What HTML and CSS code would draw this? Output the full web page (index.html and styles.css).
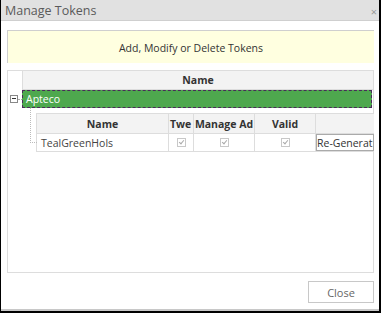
FILE: index.html
```html
<!DOCTYPE html>
<html>
<head>
<meta charset="utf-8">
<link rel="stylesheet" href="styles.css">
</head>
<body>
<div class="dialog">
  <div class="titlebar">
    <span class="title">Manage Tokens</span>
    <span class="x">×</span>
  </div>
  <div class="content">
    <div class="banner">Add, Modify or Delete Tokens</div>
    <div class="grid">
      <div class="row head-row">
        <div class="indent"></div>
        <div class="hcell">Name</div>
      </div>
      <div class="row group-row">
        <div class="indent"><span class="expander"></span><span class="stub"></span></div>
        <div class="gcell">Apteco</div>
      </div>
      <div class="row child-row">
        <div class="tree"></div>
        <div class="child">
          <div class="ctable">
            <div class="cr ch">
              <div class="c c1">Name</div>
              <div class="c c2">Twe</div>
              <div class="c c3">Manage Ad</div>
              <div class="c c4">Valid</div>
              <div class="c c5"></div>
            </div>
            <div class="cr cd">
              <div class="c c1 l">TealGreenHols</div>
              <div class="c c2"><span class="chk"></span></div>
              <div class="c c3"><span class="chk"></span></div>
              <div class="c c4"><span class="chk"></span></div>
              <div class="c c5"><span class="regen">Re-Generat</span></div>
            </div>
          </div>
        </div>
      </div>
    </div>
    <div class="footer">
      <button class="close">Close</button>
    </div>
  </div>
</div>
</body>
</html>
```

FILE: styles.css
```css
html, body { margin: 0; padding: 0; background: #fff; }
body { font-family: "Open Sans", "Noto Sans", sans-serif; font-size: 10.5px; color: #333; }
.dialog {
  width: 381px; height: 313px; box-sizing: border-box;
  border-left: 1px solid #000; border-right: 2px solid #000;
  border-bottom: 2px solid #000;
  display: flex; flex-direction: column; position: relative;
  box-shadow: inset 0 -2px 0 #c8c8c8;
}
.titlebar {
  height: 20px; background: #e1e1e1; border-bottom: 1px solid #cfcfcf;
  display: flex; align-items: center; justify-content: space-between;
  padding: 0 2px 0 4px;
}
.title { font-size: 12.5px; color: #5a5a5a; }
.x { font-size: 11px; color: #999; margin-top: 3px; }
.content { padding: 9px 5px 0 6px; display: flex; flex-direction: column; flex: 1; }
.banner {
  height: 33px; background: #ffffe0; border-top: 1px solid #cfcfcf; border-left: 1px solid #cfcfcf;
  display: flex; align-items: center; justify-content: center; box-sizing: border-box;
  padding-top: 1px; color: #333;
}
.grid {
  margin-top: 7px; height: 203px; box-sizing: border-box;
  border: 1px solid #ddd; display: flex; flex-direction: column;
}
.row { display: flex; }
.indent { width: 14px; border-right: 1px solid #ddd; position: relative; flex: none; }
.head-row { height: 19px; }
.hcell {
  flex: 1; background: #f3f3f3; font-weight: bold; color: #333;
  display: flex; align-items: center; justify-content: center;
  border-bottom: 1px solid #ddd;
}
.group-row { height: 18px; }
.group-row .indent { border-right: none; }
.expander {
  position: absolute; left: 2px; top: 5px; width: 8px; height: 8px;
  border: 1px solid #888; box-sizing: border-box; background: #fff;
}
.expander::after {
  content: ""; position: absolute; left: 1px; top: 2px; width: 4px; height: 1px; background: #333;
}
.stub { position: absolute; left: 10px; top: 9px; width: 4px; border-top: 1px dotted #aaa; }
.gcell {
  flex: 1; background: #4ea84e; color: #fff; border: 1px dashed #4a2a5a;
  display: flex; align-items: center; padding-left: 3px; box-sizing: border-box; margin-right: 1px;
}
.child-row { position: relative; padding-top: 5px; }
.tree {
  position: absolute; left: 22px; top: 0; width: 6px; height: 34px;
  border-left: 1px dotted #bbb; border-bottom: 1px dotted #bbb;
}
.child { margin-left: 28px; flex: 1; }
.ctable { border: 1px solid #ddd; border-right: none; }
.cr { display: flex; }
.ch { height: 19px; background: #f3f3f3; font-weight: bold; border-bottom: 1px solid #ddd; }
.cd { height: 17px; }
.c {
  display: flex; align-items: center; justify-content: center; border-right: 1px solid #ddd;
  box-sizing: border-box; white-space: nowrap; overflow: hidden;
}
.c1 { width: 132px; }
.c2 { width: 25px; justify-content: flex-start; padding-left: 1px; }
.cd .c2 { justify-content: center; padding-left: 0; }
.c3 { width: 61px; }
.c4 { width: 61px; }
.c5 { flex: 1; border-right: none; }
.c.l { justify-content: flex-start; padding-left: 4px; color: #444; }
.chk {
  width: 9px; height: 9px; border: 1px solid #c8c8c8; box-sizing: border-box; position: relative; background: #fff;
}
.chk::after {
  content: ""; position: absolute; left: 2px; top: 0px; width: 2px; height: 4px;
  border-right: 1px solid #aaa; border-bottom: 1px solid #aaa; transform: rotate(40deg);
}
.regen {
  display: flex; align-items: center; justify-content: center;
  width: 100%; height: 17px; border: 1px solid #aaa; box-sizing: border-box; background: #fff; color: #333;
  overflow: hidden; white-space: nowrap;
}
.footer { display: flex; justify-content: flex-end; padding-top: 8px; }
.close {
  width: 66px; height: 22px; background: #fff; border: 1px solid #c8c8c8;
  font-family: inherit; font-size: 11px; color: #666; margin-right: 0;
}
```
